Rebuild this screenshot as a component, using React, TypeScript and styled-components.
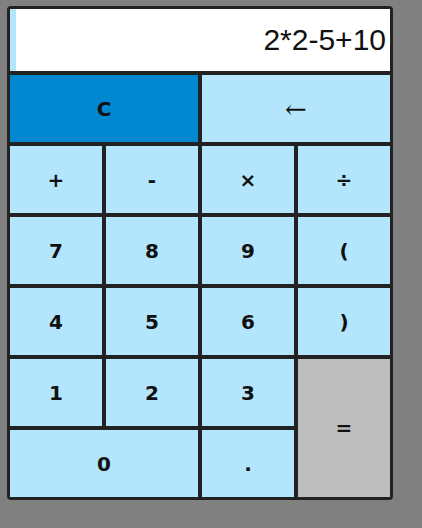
import styled, { createGlobalStyle } from "styled-components";

const GlobalStyle = createGlobalStyle`
  html, body {
    margin: 0;
    padding: 0;
    background: #808080;
    height: 100%;
  }
  body {
    font-family: "DejaVu Sans", Verdana, sans-serif;
  }
`;

const Calculator = styled.div`
  margin: 6px 0 0 7px;
  width: 380px;
  border: 3px solid #222;
  border-radius: 4px;
  background: #222;
  display: grid;
  grid-template-columns: repeat(4, 1fr);
  grid-template-rows: 62px repeat(6, 67px);
  gap: 4px;
`;

const Display = styled.div`
  grid-column: span 4;
  background: #fff;
  border-left: 6px solid #b3e5fc;
  display: flex;
  align-items: center;
  justify-content: flex-end;
  padding-right: 4px;
  font-family: "Liberation Sans", Arial, sans-serif;
  font-size: 30px;
  color: #111;
`;

type Kind = "clear" | "equals" | "normal";

const bg: Record<Kind, string> = {
  clear: "#0288d1",
  equals: "#bdbdbd",
  normal: "#b3e5fc",
};

const Key = styled.button<{ $kind?: Kind; $cols?: number; $rows?: number; $serif?: boolean }>`
  grid-column: span ${(p) => p.$cols ?? 1};
  grid-row: span ${(p) => p.$rows ?? 1};
  border: none;
  margin: 0;
  padding: 0;
  background: ${(p) => bg[p.$kind ?? "normal"]};
  color: #111;
  font-family: ${(p) => (p.$serif ? '"DejaVu Serif", "Liberation Serif", serif' : '"DejaVu Sans", Verdana, sans-serif')};
  font-weight: ${(p) => (p.$serif ? 400 : 700)};
  font-size: ${(p) => (p.$serif ? "26px" : "20px")};
  display: flex;
  align-items: center;
  justify-content: center;
  cursor: pointer;
`;

const App = () => {
  return (
    <>
      <GlobalStyle />
      <Calculator>
        <Display>2*2-5+10</Display>
        <Key $kind="clear" $cols={2}>C</Key>
        <Key $cols={2} $serif>←</Key>
        <Key>+</Key>
        <Key>-</Key>
        <Key>×</Key>
        <Key>÷</Key>
        <Key>7</Key>
        <Key>8</Key>
        <Key>9</Key>
        <Key>(</Key>
        <Key>4</Key>
        <Key>5</Key>
        <Key>6</Key>
        <Key>)</Key>
        <Key>1</Key>
        <Key>2</Key>
        <Key>3</Key>
        <Key $kind="equals" $rows={2}>=</Key>
        <Key $cols={2}>0</Key>
        <Key>.</Key>
      </Calculator>
    </>
  );
};

export default App;
